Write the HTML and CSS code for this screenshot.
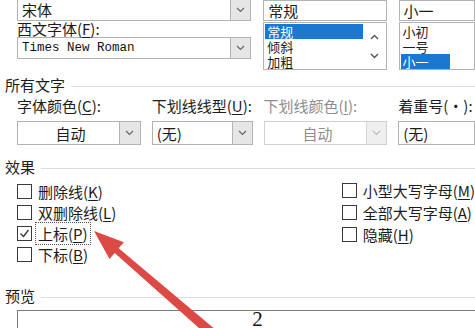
FILE: index.html
```html
<!DOCTYPE html>
<html lang="zh-CN">
<head>
  <meta charset="UTF-8">
  <title>字体</title>
<link rel="stylesheet" href="styles.css">
</head>
<body>
  <div class="dialog">
    <div class="top">
      <div class="col-font">
        <div class="combo combo-font">
          <span class="value">宋体</span>
          <span class="drop"><svg width="9" height="6" viewBox="0 0 9 6"><polyline points="1,1 4.5,4.5 8,1" fill="none" stroke="#666" stroke-width="1.2"/></svg></span>
        </div>
        <div class="label label-west">西文字体(<u>F</u>):</div>
        <div class="combo combo-west">
          <span class="value mono">Times New Roman</span>
          <span class="drop"><svg width="9" height="6" viewBox="0 0 9 6"><polyline points="1,1 4.5,4.5 8,1" fill="none" stroke="#666" stroke-width="1.2"/></svg></span>
        </div>
      </div>

      <div class="col-style">
        <div class="field">常规</div>
        <div class="list">
          <div class="items">
            <div class="item selected">常规</div>
            <div class="item">倾斜</div>
            <div class="item">加粗</div>
          </div>
          <div class="scroll">
            <svg width="9" height="6" viewBox="0 0 9 6"><polyline points="1,5 4.5,1.5 8,5" fill="none" stroke="#555" stroke-width="1.4"/></svg>
            <svg width="9" height="6" viewBox="0 0 9 6"><polyline points="1,1 4.5,4.5 8,1" fill="none" stroke="#555" stroke-width="1.4"/></svg>
          </div>
        </div>
      </div>

      <div class="col-size">
        <div class="field">小一</div>
        <div class="list">
          <div class="items">
            <div class="item">小初</div>
            <div class="item">一号</div>
            <div class="item selected">小一</div>
          </div>
          <div class="scroll"></div>
        </div>
      </div>
    </div>

    <div class="group-title">所有文字</div>
    <div class="row-all">
      <div class="cell cell-color">
        <div class="label">字体颜色(<u>C</u>):</div>
        <div class="combo combo-row">
          <span class="value center">自动</span>
          <span class="drop wide"><svg width="9" height="6" viewBox="0 0 9 6"><polyline points="1,1 4.5,4.5 8,1" fill="none" stroke="#666" stroke-width="1.2"/></svg></span>
        </div>
      </div>
      <div class="cell cell-line">
        <div class="label">下划线线型(<u>U</u>):</div>
        <div class="combo combo-row">
          <span class="value">(无)</span>
          <span class="drop"><svg width="9" height="6" viewBox="0 0 9 6"><polyline points="1,1 4.5,4.5 8,1" fill="none" stroke="#666" stroke-width="1.2"/></svg></span>
        </div>
      </div>
      <div class="cell cell-color">
        <div class="label disabled">下划线颜色(<u>I</u>):</div>
        <div class="combo combo-row combo-disabled">
          <span class="value center">自动</span>
          <span class="drop"><svg width="9" height="6" viewBox="0 0 9 6"><polyline points="1,1 4.5,4.5 8,1" fill="none" stroke="#bbb" stroke-width="1.2"/></svg></span>
        </div>
      </div>
      <div class="cell cell-emph">
        <div class="label">着重号(·):</div>
        <div class="combo combo-row">
          <span class="value">(无)</span>
        </div>
      </div>
    </div>

    <div class="group-title">效果</div>
    <div class="effects">
      <div class="fx-left">
        <div class="check"><span class="box"></span>删除线(<u>K</u>)</div>
        <div class="check"><span class="box"></span>双删除线(<u>L</u>)</div>
        <div class="check"><span class="box checked"><svg width="13" height="13" viewBox="0 0 13 13"><polyline points="2.5,6.5 5.5,9.5 10.5,3" fill="none" stroke="#333" stroke-width="1.3"/></svg></span><span class="focus">上标(<u>P</u>)</span></div>
        <div class="check"><span class="box"></span>下标(<u>B</u>)</div>
      </div>
      <div class="fx-right">
        <div class="check"><span class="box"></span>小型大写字母(<u>M</u>)</div>
        <div class="check"><span class="box"></span>全部大写字母(<u>A</u>)</div>
        <div class="check"><span class="box"></span>隐藏(<u>H</u>)</div>
      </div>
    </div>

    <div class="group-title preview-title">预览</div>
    <div class="preview">2</div>
  </div>

  <svg class="arrow" width="475" height="328" viewBox="0 0 475 328">
    <polygon points="94,231 123.9,242.3 118.7,248.3 223.3,336.2 216.7,343.8 114.7,252.9 109.5,258.9" fill="#dc4a45"/>
  </svg>
</body>
</html>
```

FILE: styles.css
```css
body {
  margin: 0;
  width: 475px;
  height: 328px;
  overflow: hidden;
  position: relative;
  background-color: #ffffff;
  color: #1c1c1c;
  font-family: "Noto Sans CJK SC", sans-serif;
  font-size: 15px;
}
u {
  text-decoration-thickness: 1px;
  text-underline-offset: 2px;
}
.dialog {
  padding-left: 5px;
  white-space: nowrap;
}
.top {
  display: flex;
  margin-top: -2px;
  padding-left: 12px;
}
.col-font {
  width: 245px;
}
.col-style {
  width: 129px;
  margin-left: 12px;
}
.col-size {
  width: 80px;
  margin-left: 12px;
}
.combo {
  display: flex;
  box-sizing: border-box;
  border: 1px solid #b3b3b3;
  background-color: #fff;
}
.combo .value {
  flex: 1;
  padding-left: 4px;
  display: flex;
  align-items: center;
}
.combo .value.center {
  justify-content: center;
}
.combo .drop {
  width: 19px;
  background-color: #e6e6e6;
  border-left: 1px solid #b3b3b3;
  display: flex;
  align-items: center;
  justify-content: center;
}
.combo .drop.wide {
  width: 20px;
}
.combo-font {
  height: 23px;
}
.label-west {
  height: 28px;
  line-height: 28px;
}
.combo-west {
  height: 22px;
}
.mono {
  font-family: "Liberation Mono", monospace;
  font-size: 12.5px;
  color: #111;
}
.field {
  margin-top: 2px;
  height: 21px;
  box-sizing: border-box;
  border: 1px solid #b3b3b3;
  padding-left: 4px;
  line-height: 19px;
}
.list {
  display: flex;
  margin-top: 1px;
  height: 48px;
  box-sizing: border-box;
  border: 1px solid #b3b3b3;
  overflow: hidden;
}
.list .items {
  flex: 1;
  padding: 1px 0 0 1px;
}
.list .item {
  height: 15px;
  line-height: 15px;
  font-size: 13px;
  padding-left: 2px;
}
.list .item.selected {
  background-color: #1a78d0;
  color: #fff;
}
.list .scroll {
  width: 23px;
  display: flex;
  flex-direction: column;
  justify-content: space-around;
  align-items: center;
  padding: 4px 0;
}
.col-size .list .scroll {
  width: 24px;
}
.group-title {
  display: flex;
  align-items: center;
  height: 16px;
  line-height: 16px;
  margin-top: 7px;
}
.group-title::after {
  content: "";
  flex: 1;
  height: 1px;
  margin: 3px 0 0 6px;
  background-color: #dedede;
}
.row-all {
  display: flex;
  gap: 11px;
  padding-left: 12px;
  margin-top: 5px;
}
.cell-color {
  width: 129px;
}
.cell-line {
  width: 105px;
}
.cell-emph {
  width: 80px;
}
.label {
  height: 16px;
  line-height: 16px;
}
.label.disabled {
  color: #8e8e8e;
}
.combo-row {
  margin-top: 7px;
  height: 24px;
}
.combo-disabled {
  border-color: #d0d0d0;
  color: #8e8e8e;
}
.combo-disabled .drop {
  background-color: #efefef;
  border-left-color: #d6d6d6;
}
.row-all + .group-title {
  margin-top: 14px;
}
.effects {
  display: flex;
  padding-left: 12px;
  margin-top: 8px;
}
.fx-left {
  width: 326px;
  display: flex;
  flex-direction: column;
  gap: 5px;
}
.fx-right {
  display: flex;
  flex-direction: column;
  gap: 6px;
  margin-top: -1px;
}
.check {
  display: flex;
  align-items: center;
  height: 16px;
}
.box {
  width: 15px;
  height: 15px;
  box-sizing: border-box;
  border: 1px solid #3a3a3a;
  margin-right: 6px;
  display: flex;
  align-items: center;
  justify-content: center;
}
.focus {
  outline: 1px dotted #555;
  margin-left: -2px;
  padding: 0 2px;
}
.preview-title {
  margin-top: 26px;
}
.preview {
  margin: 6px 0 0 12px;
  height: 30px;
  box-sizing: border-box;
  border: 1px solid #7a7a7a;
  border-right: none;
  padding-left: 22px;
  text-align: center;
  font-family: "Liberation Serif", serif;
  font-size: 21px;
  line-height: 16px;
  color: #111;
}
.arrow {
  position: absolute;
  left: 0;
  top: 0;
  pointer-events: none;
}
```
